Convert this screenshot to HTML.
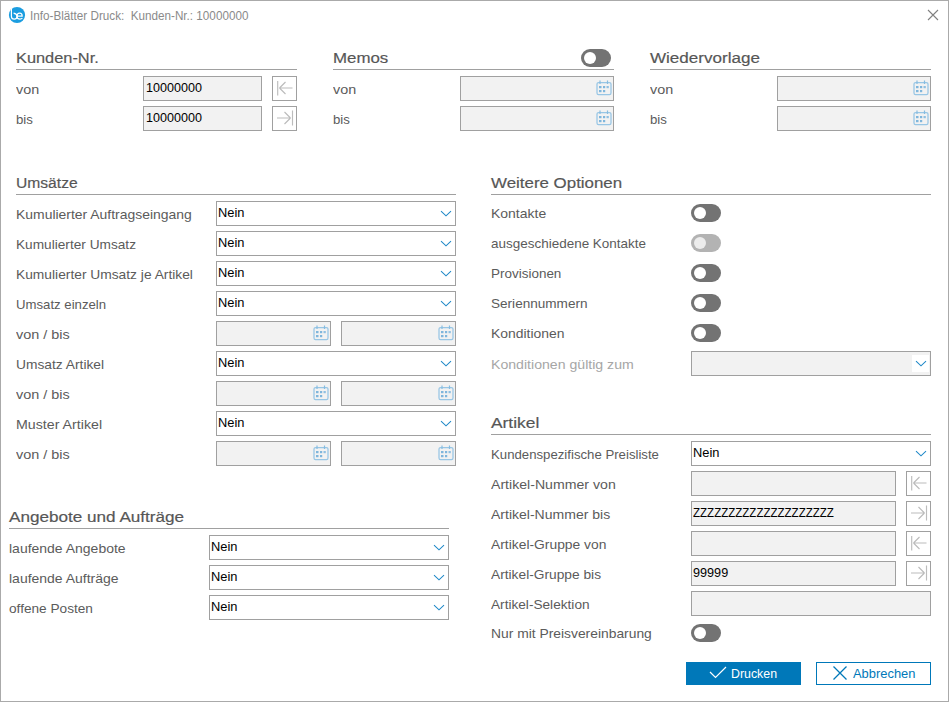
<!DOCTYPE html>
<html><head><meta charset="utf-8"><title>Info-Blätter Druck</title>
<style>
html,body{margin:0;padding:0;}
body{width:949px;height:702px;position:relative;overflow:hidden;background:#fff;font-family:"Liberation Sans", sans-serif;}
.frame{position:absolute;left:0;top:0;width:949px;height:702px;box-sizing:border-box;border:1px solid #aaaaaa;}
.t{position:absolute;white-space:nowrap;}
.ln{position:absolute;height:1px;background:#a0a0a0;}
.box{position:absolute;height:25px;box-sizing:border-box;border:1px solid #a0a0a0;}
.val{position:absolute;left:2px;top:4px;font-size:12.4px;line-height:14px;color:#000;white-space:nowrap;}
.tg{position:absolute;width:30px;height:18px;border-radius:9px;}
.kn{position:absolute;left:3px;top:3px;width:12px;height:12px;border-radius:6px;}
.chev{display:block}
svg{display:block}
</style></head><body>
<div class="frame"></div>
<svg style="position:absolute;left:0;top:0" width="30" height="30" viewBox="0 0 30 30"><circle cx="17" cy="15" r="8.1" fill="#1b9de0"/><path d="M11.4 9 V16.2 Q11.4 19.1 14.2 19.1 Q17 19.1 17 16.2 Q17 13.9 13.6 13.2" fill="none" stroke="#fff" stroke-width="1.2"/><path d="M17.2 16.2 H22.2 Q22.2 13.2 19.7 13.2 Q17 13.2 17 16.2 Q17 19.1 20 19.1 Q21.5 19.1 22.4 18.2" fill="none" stroke="#fff" stroke-width="1.2"/></svg>
<div class="t" style="left:30.40px;top:9.50px;font-size:12.40px;line-height:12.40px;color:#8a8a8a;transform:scaleX(0.9437);transform-origin:0 0;">Info-Blätter Druck:&nbsp; Kunden-Nr.: 10000000</div>
<svg style="position:absolute;left:927px;top:9px" width="13" height="13" viewBox="0 0 13 13"><path d="M1 1 L11 11 M11 1 L1 11" stroke="#808080" stroke-width="1.1" fill="none"/></svg>
<div class="t" style="left:16.20px;top:49.88px;font-size:15.50px;line-height:15.50px;color:#555555;transform:scaleX(1.0557);transform-origin:0 0;-webkit-text-stroke:0.2px #606060;">Kunden-Nr.</div>
<div class="ln" style="left:16px;top:69px;width:281px"></div>
<div class="t" style="left:15.60px;top:83.04px;font-size:13.30px;line-height:13.30px;color:#5b5b5b;transform:scaleX(1.0788);transform-origin:0 0;">von</div>
<div class="t" style="left:16.30px;top:113.04px;font-size:13.30px;line-height:13.30px;color:#5b5b5b;transform:scaleX(0.9927);transform-origin:0 0;">bis</div>
<div class="box" style="left:143px;top:76px;width:119px;background:#f2f2f2"></div>
<div class="t" style="left:145.60px;top:81.50px;font-size:12.40px;line-height:12.40px;color:#000000;transform:scaleX(1.0149);transform-origin:0 0;">10000000</div>
<div class="box" style="left:143px;top:106px;width:119px;background:#f2f2f2"></div>
<div class="t" style="left:145.60px;top:111.50px;font-size:12.40px;line-height:12.40px;color:#000000;transform:scaleX(1.0149);transform-origin:0 0;">10000000</div>
<div class="box" style="left:272px;top:76px;width:25px;background:#fff;overflow:hidden"><div style="position:absolute;left:-1px;top:-1px"><svg width="25" height="25" viewBox="0 0 25 25"><path d="M5.7 5 V19.5 M7.5 12 H20.5 M7.5 12 L13.5 6 M7.5 12 L13.5 18" stroke="#bcbcbc" stroke-width="1.15" fill="none"/></svg></div></div>
<div class="box" style="left:272px;top:106px;width:25px;background:#fff;overflow:hidden"><div style="position:absolute;left:-1px;top:-1px"><svg width="25" height="25" viewBox="0 0 25 25"><path d="M20.5 4.5 V19.5 M5 12 H18.5 M18.5 12 L12.5 6 M18.5 12 L12.5 18" stroke="#bcbcbc" stroke-width="1.15" fill="none"/></svg></div></div>
<div class="t" style="left:332.70px;top:49.88px;font-size:15.50px;line-height:15.50px;color:#555555;transform:scaleX(1.0877);transform-origin:0 0;-webkit-text-stroke:0.2px #606060;">Memos</div>
<div class="ln" style="left:333px;top:69px;width:281px"></div>
<div class="t" style="left:332.60px;top:83.04px;font-size:13.30px;line-height:13.30px;color:#5b5b5b;transform:scaleX(1.0788);transform-origin:0 0;">von</div>
<div class="t" style="left:333.30px;top:113.04px;font-size:13.30px;line-height:13.30px;color:#5b5b5b;transform:scaleX(0.9927);transform-origin:0 0;">bis</div>
<div class="box" style="left:460px;top:76px;width:154px;background:#f2f2f2">
<div style="position:absolute;left:135px;top:3px;width:17px;height:17px"><svg width="17" height="17" viewBox="0 0 17 17"><rect x="1" y="2.5" width="14" height="12" rx="1.6" fill="none" stroke="#98c6e5" stroke-width="1.25"/><path d="M4 0.4 V4 M11.5 0.4 V4" stroke="#86bce0" stroke-width="1.2" fill="none"/><rect x="3" y="6" width="2.5" height="2.2" fill="#7fb6dc"/><rect x="7" y="6" width="2.2" height="2.2" fill="#7fb6dc"/><rect x="10.5" y="6" width="2.3" height="2.2" fill="#8fc0e2"/><rect x="3" y="10" width="2.5" height="2.2" fill="#7fb6dc"/><rect x="7" y="10" width="2.2" height="2.2" fill="#7fb6dc"/></svg></div>
</div>
<div class="box" style="left:460px;top:106px;width:154px;background:#f2f2f2">
<div style="position:absolute;left:135px;top:3px;width:17px;height:17px"><svg width="17" height="17" viewBox="0 0 17 17"><rect x="1" y="2.5" width="14" height="12" rx="1.6" fill="none" stroke="#98c6e5" stroke-width="1.25"/><path d="M4 0.4 V4 M11.5 0.4 V4" stroke="#86bce0" stroke-width="1.2" fill="none"/><rect x="3" y="6" width="2.5" height="2.2" fill="#7fb6dc"/><rect x="7" y="6" width="2.2" height="2.2" fill="#7fb6dc"/><rect x="10.5" y="6" width="2.3" height="2.2" fill="#8fc0e2"/><rect x="3" y="10" width="2.5" height="2.2" fill="#7fb6dc"/><rect x="7" y="10" width="2.2" height="2.2" fill="#7fb6dc"/></svg></div>
</div>
<div class="t" style="left:649.60px;top:49.88px;font-size:15.50px;line-height:15.50px;color:#555555;transform:scaleX(1.0993);transform-origin:0 0;-webkit-text-stroke:0.2px #606060;">Wiedervorlage</div>
<div class="ln" style="left:650px;top:69px;width:281px"></div>
<div class="t" style="left:649.60px;top:83.04px;font-size:13.30px;line-height:13.30px;color:#5b5b5b;transform:scaleX(1.0788);transform-origin:0 0;">von</div>
<div class="t" style="left:650.30px;top:113.04px;font-size:13.30px;line-height:13.30px;color:#5b5b5b;transform:scaleX(0.9927);transform-origin:0 0;">bis</div>
<div class="box" style="left:777px;top:76px;width:154px;background:#f2f2f2">
<div style="position:absolute;left:135px;top:3px;width:17px;height:17px"><svg width="17" height="17" viewBox="0 0 17 17"><rect x="1" y="2.5" width="14" height="12" rx="1.6" fill="none" stroke="#98c6e5" stroke-width="1.25"/><path d="M4 0.4 V4 M11.5 0.4 V4" stroke="#86bce0" stroke-width="1.2" fill="none"/><rect x="3" y="6" width="2.5" height="2.2" fill="#7fb6dc"/><rect x="7" y="6" width="2.2" height="2.2" fill="#7fb6dc"/><rect x="10.5" y="6" width="2.3" height="2.2" fill="#8fc0e2"/><rect x="3" y="10" width="2.5" height="2.2" fill="#7fb6dc"/><rect x="7" y="10" width="2.2" height="2.2" fill="#7fb6dc"/></svg></div>
</div>
<div class="box" style="left:777px;top:106px;width:154px;background:#f2f2f2">
<div style="position:absolute;left:135px;top:3px;width:17px;height:17px"><svg width="17" height="17" viewBox="0 0 17 17"><rect x="1" y="2.5" width="14" height="12" rx="1.6" fill="none" stroke="#98c6e5" stroke-width="1.25"/><path d="M4 0.4 V4 M11.5 0.4 V4" stroke="#86bce0" stroke-width="1.2" fill="none"/><rect x="3" y="6" width="2.5" height="2.2" fill="#7fb6dc"/><rect x="7" y="6" width="2.2" height="2.2" fill="#7fb6dc"/><rect x="10.5" y="6" width="2.3" height="2.2" fill="#8fc0e2"/><rect x="3" y="10" width="2.5" height="2.2" fill="#7fb6dc"/><rect x="7" y="10" width="2.2" height="2.2" fill="#7fb6dc"/></svg></div>
</div>
<div class="tg" style="left:581px;top:49px;background:#737373"><div class="kn" style="background:#ffffff"></div></div>
<div class="t" style="left:16.20px;top:174.88px;font-size:15.50px;line-height:15.50px;color:#555555;transform:scaleX(1.0078);transform-origin:0 0;-webkit-text-stroke:0.2px #606060;">Umsätze</div>
<div class="ln" style="left:16px;top:194px;width:440px"></div>
<div class="t" style="left:16.30px;top:208.04px;font-size:13.30px;line-height:13.30px;color:#5b5b5b;transform:scaleX(1.0474);transform-origin:0 0;">Kumulierter Auftragseingang</div>
<div class="box" style="left:216px;top:201px;width:240px;background:#fff">
<div style="position:absolute;right:3px;top:9px;width:12px;height:7px"><svg class="chev" width="12" height="7" viewBox="0 0 12 7" style="overflow:visible"><path d="M1 0.2 L6 4.8 L11 0.2" fill="none" stroke="#1e88c8" stroke-width="1.05"/></svg></div>
</div>
<div class="t" style="left:218.30px;top:206.50px;font-size:12.40px;line-height:12.40px;color:#000000;transform:scaleX(1.0374);transform-origin:0 0;">Nein</div>
<div class="t" style="left:16.30px;top:238.04px;font-size:13.30px;line-height:13.30px;color:#5b5b5b;transform:scaleX(1.0276);transform-origin:0 0;">Kumulierter Umsatz</div>
<div class="box" style="left:216px;top:231px;width:240px;background:#fff">
<div style="position:absolute;right:3px;top:9px;width:12px;height:7px"><svg class="chev" width="12" height="7" viewBox="0 0 12 7" style="overflow:visible"><path d="M1 0.2 L6 4.8 L11 0.2" fill="none" stroke="#1e88c8" stroke-width="1.05"/></svg></div>
</div>
<div class="t" style="left:218.30px;top:236.50px;font-size:12.40px;line-height:12.40px;color:#000000;transform:scaleX(1.0374);transform-origin:0 0;">Nein</div>
<div class="t" style="left:16.30px;top:268.04px;font-size:13.30px;line-height:13.30px;color:#5b5b5b;transform:scaleX(1.0365);transform-origin:0 0;">Kumulierter Umsatz je Artikel</div>
<div class="box" style="left:216px;top:261px;width:240px;background:#fff">
<div style="position:absolute;right:3px;top:9px;width:12px;height:7px"><svg class="chev" width="12" height="7" viewBox="0 0 12 7" style="overflow:visible"><path d="M1 0.2 L6 4.8 L11 0.2" fill="none" stroke="#1e88c8" stroke-width="1.05"/></svg></div>
</div>
<div class="t" style="left:218.30px;top:266.50px;font-size:12.40px;line-height:12.40px;color:#000000;transform:scaleX(1.0374);transform-origin:0 0;">Nein</div>
<div class="t" style="left:16.30px;top:298.04px;font-size:13.30px;line-height:13.30px;color:#5b5b5b;transform:scaleX(0.9915);transform-origin:0 0;">Umsatz einzeln</div>
<div class="box" style="left:216px;top:291px;width:240px;background:#fff">
<div style="position:absolute;right:3px;top:9px;width:12px;height:7px"><svg class="chev" width="12" height="7" viewBox="0 0 12 7" style="overflow:visible"><path d="M1 0.2 L6 4.8 L11 0.2" fill="none" stroke="#1e88c8" stroke-width="1.05"/></svg></div>
</div>
<div class="t" style="left:218.30px;top:296.50px;font-size:12.40px;line-height:12.40px;color:#000000;transform:scaleX(1.0374);transform-origin:0 0;">Nein</div>
<div class="t" style="left:15.60px;top:328.04px;font-size:13.30px;line-height:13.30px;color:#5b5b5b;transform:scaleX(1.0854);transform-origin:0 0;">von / bis</div>
<div class="box" style="left:216px;top:321px;width:115px;background:#f2f2f2">
<div style="position:absolute;left:96px;top:3px;width:17px;height:17px"><svg width="17" height="17" viewBox="0 0 17 17"><rect x="1" y="2.5" width="14" height="12" rx="1.6" fill="none" stroke="#98c6e5" stroke-width="1.25"/><path d="M4 0.4 V4 M11.5 0.4 V4" stroke="#86bce0" stroke-width="1.2" fill="none"/><rect x="3" y="6" width="2.5" height="2.2" fill="#7fb6dc"/><rect x="7" y="6" width="2.2" height="2.2" fill="#7fb6dc"/><rect x="10.5" y="6" width="2.3" height="2.2" fill="#8fc0e2"/><rect x="3" y="10" width="2.5" height="2.2" fill="#7fb6dc"/><rect x="7" y="10" width="2.2" height="2.2" fill="#7fb6dc"/></svg></div>
</div>
<div class="box" style="left:341px;top:321px;width:115px;background:#f2f2f2">
<div style="position:absolute;left:96px;top:3px;width:17px;height:17px"><svg width="17" height="17" viewBox="0 0 17 17"><rect x="1" y="2.5" width="14" height="12" rx="1.6" fill="none" stroke="#98c6e5" stroke-width="1.25"/><path d="M4 0.4 V4 M11.5 0.4 V4" stroke="#86bce0" stroke-width="1.2" fill="none"/><rect x="3" y="6" width="2.5" height="2.2" fill="#7fb6dc"/><rect x="7" y="6" width="2.2" height="2.2" fill="#7fb6dc"/><rect x="10.5" y="6" width="2.3" height="2.2" fill="#8fc0e2"/><rect x="3" y="10" width="2.5" height="2.2" fill="#7fb6dc"/><rect x="7" y="10" width="2.2" height="2.2" fill="#7fb6dc"/></svg></div>
</div>
<div class="t" style="left:16.30px;top:358.04px;font-size:13.30px;line-height:13.30px;color:#5b5b5b;transform:scaleX(1.0366);transform-origin:0 0;">Umsatz Artikel</div>
<div class="box" style="left:216px;top:351px;width:240px;background:#fff">
<div style="position:absolute;right:3px;top:9px;width:12px;height:7px"><svg class="chev" width="12" height="7" viewBox="0 0 12 7" style="overflow:visible"><path d="M1 0.2 L6 4.8 L11 0.2" fill="none" stroke="#1e88c8" stroke-width="1.05"/></svg></div>
</div>
<div class="t" style="left:218.30px;top:356.50px;font-size:12.40px;line-height:12.40px;color:#000000;transform:scaleX(1.0374);transform-origin:0 0;">Nein</div>
<div class="t" style="left:15.60px;top:388.04px;font-size:13.30px;line-height:13.30px;color:#5b5b5b;transform:scaleX(1.0854);transform-origin:0 0;">von / bis</div>
<div class="box" style="left:216px;top:381px;width:115px;background:#f2f2f2">
<div style="position:absolute;left:96px;top:3px;width:17px;height:17px"><svg width="17" height="17" viewBox="0 0 17 17"><rect x="1" y="2.5" width="14" height="12" rx="1.6" fill="none" stroke="#98c6e5" stroke-width="1.25"/><path d="M4 0.4 V4 M11.5 0.4 V4" stroke="#86bce0" stroke-width="1.2" fill="none"/><rect x="3" y="6" width="2.5" height="2.2" fill="#7fb6dc"/><rect x="7" y="6" width="2.2" height="2.2" fill="#7fb6dc"/><rect x="10.5" y="6" width="2.3" height="2.2" fill="#8fc0e2"/><rect x="3" y="10" width="2.5" height="2.2" fill="#7fb6dc"/><rect x="7" y="10" width="2.2" height="2.2" fill="#7fb6dc"/></svg></div>
</div>
<div class="box" style="left:341px;top:381px;width:115px;background:#f2f2f2">
<div style="position:absolute;left:96px;top:3px;width:17px;height:17px"><svg width="17" height="17" viewBox="0 0 17 17"><rect x="1" y="2.5" width="14" height="12" rx="1.6" fill="none" stroke="#98c6e5" stroke-width="1.25"/><path d="M4 0.4 V4 M11.5 0.4 V4" stroke="#86bce0" stroke-width="1.2" fill="none"/><rect x="3" y="6" width="2.5" height="2.2" fill="#7fb6dc"/><rect x="7" y="6" width="2.2" height="2.2" fill="#7fb6dc"/><rect x="10.5" y="6" width="2.3" height="2.2" fill="#8fc0e2"/><rect x="3" y="10" width="2.5" height="2.2" fill="#7fb6dc"/><rect x="7" y="10" width="2.2" height="2.2" fill="#7fb6dc"/></svg></div>
</div>
<div class="t" style="left:16.30px;top:418.04px;font-size:13.30px;line-height:13.30px;color:#5b5b5b;transform:scaleX(1.0683);transform-origin:0 0;">Muster Artikel</div>
<div class="box" style="left:216px;top:411px;width:240px;background:#fff">
<div style="position:absolute;right:3px;top:9px;width:12px;height:7px"><svg class="chev" width="12" height="7" viewBox="0 0 12 7" style="overflow:visible"><path d="M1 0.2 L6 4.8 L11 0.2" fill="none" stroke="#1e88c8" stroke-width="1.05"/></svg></div>
</div>
<div class="t" style="left:218.30px;top:416.50px;font-size:12.40px;line-height:12.40px;color:#000000;transform:scaleX(1.0374);transform-origin:0 0;">Nein</div>
<div class="t" style="left:15.60px;top:448.04px;font-size:13.30px;line-height:13.30px;color:#5b5b5b;transform:scaleX(1.0854);transform-origin:0 0;">von / bis</div>
<div class="box" style="left:216px;top:441px;width:115px;background:#f2f2f2">
<div style="position:absolute;left:96px;top:3px;width:17px;height:17px"><svg width="17" height="17" viewBox="0 0 17 17"><rect x="1" y="2.5" width="14" height="12" rx="1.6" fill="none" stroke="#98c6e5" stroke-width="1.25"/><path d="M4 0.4 V4 M11.5 0.4 V4" stroke="#86bce0" stroke-width="1.2" fill="none"/><rect x="3" y="6" width="2.5" height="2.2" fill="#7fb6dc"/><rect x="7" y="6" width="2.2" height="2.2" fill="#7fb6dc"/><rect x="10.5" y="6" width="2.3" height="2.2" fill="#8fc0e2"/><rect x="3" y="10" width="2.5" height="2.2" fill="#7fb6dc"/><rect x="7" y="10" width="2.2" height="2.2" fill="#7fb6dc"/></svg></div>
</div>
<div class="box" style="left:341px;top:441px;width:115px;background:#f2f2f2">
<div style="position:absolute;left:96px;top:3px;width:17px;height:17px"><svg width="17" height="17" viewBox="0 0 17 17"><rect x="1" y="2.5" width="14" height="12" rx="1.6" fill="none" stroke="#98c6e5" stroke-width="1.25"/><path d="M4 0.4 V4 M11.5 0.4 V4" stroke="#86bce0" stroke-width="1.2" fill="none"/><rect x="3" y="6" width="2.5" height="2.2" fill="#7fb6dc"/><rect x="7" y="6" width="2.2" height="2.2" fill="#7fb6dc"/><rect x="10.5" y="6" width="2.3" height="2.2" fill="#8fc0e2"/><rect x="3" y="10" width="2.5" height="2.2" fill="#7fb6dc"/><rect x="7" y="10" width="2.2" height="2.2" fill="#7fb6dc"/></svg></div>
</div>
<div class="t" style="left:8.60px;top:508.88px;font-size:15.50px;line-height:15.50px;color:#555555;transform:scaleX(1.1043);transform-origin:0 0;-webkit-text-stroke:0.2px #606060;">Angebote und Aufträge</div>
<div class="ln" style="left:9px;top:528px;width:440px"></div>
<div class="t" style="left:8.70px;top:542.04px;font-size:13.30px;line-height:13.30px;color:#5b5b5b;transform:scaleX(1.0512);transform-origin:0 0;">laufende Angebote</div>
<div class="box" style="left:209px;top:535px;width:240px;background:#fff">
<div style="position:absolute;right:3px;top:9px;width:12px;height:7px"><svg class="chev" width="12" height="7" viewBox="0 0 12 7" style="overflow:visible"><path d="M1 0.2 L6 4.8 L11 0.2" fill="none" stroke="#1e88c8" stroke-width="1.05"/></svg></div>
</div>
<div class="t" style="left:211.30px;top:540.50px;font-size:12.40px;line-height:12.40px;color:#000000;transform:scaleX(1.0374);transform-origin:0 0;">Nein</div>
<div class="t" style="left:8.70px;top:572.04px;font-size:13.30px;line-height:13.30px;color:#5b5b5b;transform:scaleX(1.0511);transform-origin:0 0;">laufende Aufträge</div>
<div class="box" style="left:209px;top:565px;width:240px;background:#fff">
<div style="position:absolute;right:3px;top:9px;width:12px;height:7px"><svg class="chev" width="12" height="7" viewBox="0 0 12 7" style="overflow:visible"><path d="M1 0.2 L6 4.8 L11 0.2" fill="none" stroke="#1e88c8" stroke-width="1.05"/></svg></div>
</div>
<div class="t" style="left:211.30px;top:570.50px;font-size:12.40px;line-height:12.40px;color:#000000;transform:scaleX(1.0374);transform-origin:0 0;">Nein</div>
<div class="t" style="left:8.70px;top:602.04px;font-size:13.30px;line-height:13.30px;color:#5b5b5b;transform:scaleX(1.0257);transform-origin:0 0;">offene Posten</div>
<div class="box" style="left:209px;top:595px;width:240px;background:#fff">
<div style="position:absolute;right:3px;top:9px;width:12px;height:7px"><svg class="chev" width="12" height="7" viewBox="0 0 12 7" style="overflow:visible"><path d="M1 0.2 L6 4.8 L11 0.2" fill="none" stroke="#1e88c8" stroke-width="1.05"/></svg></div>
</div>
<div class="t" style="left:211.30px;top:600.50px;font-size:12.40px;line-height:12.40px;color:#000000;transform:scaleX(1.0374);transform-origin:0 0;">Nein</div>
<div class="t" style="left:490.60px;top:174.88px;font-size:15.50px;line-height:15.50px;color:#555555;transform:scaleX(1.0900);transform-origin:0 0;-webkit-text-stroke:0.2px #606060;">Weitere Optionen</div>
<div class="ln" style="left:491px;top:194px;width:440px"></div>
<div class="t" style="left:491.10px;top:207.04px;font-size:13.30px;line-height:13.30px;color:#5b5b5b;transform:scaleX(1.0507);transform-origin:0 0;">Kontakte</div>
<div class="tg" style="left:691px;top:204px;background:#737373"><div class="kn" style="background:#ffffff"></div></div>
<div class="t" style="left:491.30px;top:237.04px;font-size:13.30px;line-height:13.30px;color:#5b5b5b;transform:scaleX(1.0132);transform-origin:0 0;">ausgeschiedene Kontakte</div>
<div class="tg" style="left:691px;top:234px;background:#b3b3b3"><div class="kn" style="background:#ececec"></div></div>
<div class="t" style="left:491.30px;top:267.04px;font-size:13.30px;line-height:13.30px;color:#5b5b5b;transform:scaleX(1.0126);transform-origin:0 0;">Provisionen</div>
<div class="tg" style="left:691px;top:264px;background:#737373"><div class="kn" style="background:#ffffff"></div></div>
<div class="t" style="left:491.30px;top:297.04px;font-size:13.30px;line-height:13.30px;color:#5b5b5b;transform:scaleX(1.0205);transform-origin:0 0;">Seriennummern</div>
<div class="tg" style="left:691px;top:294px;background:#737373"><div class="kn" style="background:#ffffff"></div></div>
<div class="t" style="left:491.30px;top:327.04px;font-size:13.30px;line-height:13.30px;color:#5b5b5b;transform:scaleX(1.0467);transform-origin:0 0;">Konditionen</div>
<div class="tg" style="left:691px;top:324px;background:#737373"><div class="kn" style="background:#ffffff"></div></div>
<div class="t" style="left:491.30px;top:358.04px;font-size:13.30px;line-height:13.30px;color:#a6a6a6;transform:scaleX(1.0610);transform-origin:0 0;">Konditionen gültig zum</div>
<div class="box" style="left:691px;top:351px;width:240px;background:#f2f2f2">
<div style="position:absolute;right:1px;top:3px;width:17px;height:17px;background:#fff"></div>
<div style="position:absolute;right:3px;top:9px;width:12px;height:7px"><svg class="chev" width="12" height="7" viewBox="0 0 12 7" style="overflow:visible"><path d="M1 0.2 L6 4.8 L11 0.2" fill="none" stroke="#1e88c8" stroke-width="1.05"/></svg></div>
</div>
<div class="t" style="left:490.50px;top:414.88px;font-size:15.50px;line-height:15.50px;color:#555555;transform:scaleX(1.1209);transform-origin:0 0;-webkit-text-stroke:0.2px #606060;">Artikel</div>
<div class="ln" style="left:491px;top:434px;width:440px"></div>
<div class="t" style="left:491.30px;top:448.04px;font-size:13.30px;line-height:13.30px;color:#5b5b5b;transform:scaleX(0.9923);transform-origin:0 0;">Kundenspezifische Preisliste</div>
<div class="box" style="left:691px;top:441px;width:240px;background:#fff">
<div style="position:absolute;right:3px;top:9px;width:12px;height:7px"><svg class="chev" width="12" height="7" viewBox="0 0 12 7" style="overflow:visible"><path d="M1 0.2 L6 4.8 L11 0.2" fill="none" stroke="#1e88c8" stroke-width="1.05"/></svg></div>
</div>
<div class="t" style="left:693.30px;top:446.50px;font-size:12.40px;line-height:12.40px;color:#000000;transform:scaleX(1.0374);transform-origin:0 0;">Nein</div>
<div class="t" style="left:491.30px;top:478.04px;font-size:13.30px;line-height:13.30px;color:#5b5b5b;transform:scaleX(1.0618);transform-origin:0 0;">Artikel-Nummer von</div>
<div class="box" style="left:691px;top:471px;width:205px;background:#f2f2f2"></div>
<div class="box" style="left:906px;top:471px;width:25px;background:#fff;overflow:hidden"><div style="position:absolute;left:-1px;top:-1px"><svg width="25" height="25" viewBox="0 0 25 25"><path d="M5.7 5 V19.5 M7.5 12 H20.5 M7.5 12 L13.5 6 M7.5 12 L13.5 18" stroke="#bcbcbc" stroke-width="1.15" fill="none"/></svg></div></div>
<div class="t" style="left:491.30px;top:508.04px;font-size:13.30px;line-height:13.30px;color:#5b5b5b;transform:scaleX(1.0544);transform-origin:0 0;">Artikel-Nummer bis</div>
<div class="box" style="left:691px;top:501px;width:205px;background:#f2f2f2"></div>
<div class="t" style="left:692.50px;top:506.50px;font-size:12.40px;line-height:12.40px;color:#000000;transform:scaleX(0.9305);transform-origin:0 0;">ZZZZZZZZZZZZZZZZZZZZ</div>
<div class="box" style="left:906px;top:501px;width:25px;background:#fff;overflow:hidden"><div style="position:absolute;left:-1px;top:-1px"><svg width="25" height="25" viewBox="0 0 25 25"><path d="M20.5 4.5 V19.5 M5 12 H18.5 M18.5 12 L12.5 6 M18.5 12 L12.5 18" stroke="#bcbcbc" stroke-width="1.15" fill="none"/></svg></div></div>
<div class="t" style="left:491.30px;top:538.04px;font-size:13.30px;line-height:13.30px;color:#5b5b5b;transform:scaleX(1.0413);transform-origin:0 0;">Artikel-Gruppe von</div>
<div class="box" style="left:691px;top:531px;width:205px;background:#f2f2f2"></div>
<div class="box" style="left:906px;top:531px;width:25px;background:#fff;overflow:hidden"><div style="position:absolute;left:-1px;top:-1px"><svg width="25" height="25" viewBox="0 0 25 25"><path d="M5.7 5 V19.5 M7.5 12 H20.5 M7.5 12 L13.5 6 M7.5 12 L13.5 18" stroke="#bcbcbc" stroke-width="1.15" fill="none"/></svg></div></div>
<div class="t" style="left:491.30px;top:568.04px;font-size:13.30px;line-height:13.30px;color:#5b5b5b;transform:scaleX(1.0338);transform-origin:0 0;">Artikel-Gruppe bis</div>
<div class="box" style="left:691px;top:561px;width:205px;background:#f2f2f2"></div>
<div class="t" style="left:692.80px;top:566.50px;font-size:12.40px;line-height:12.40px;color:#000000;transform:scaleX(1.0211);transform-origin:0 0;">99999</div>
<div class="box" style="left:906px;top:561px;width:25px;background:#fff;overflow:hidden"><div style="position:absolute;left:-1px;top:-1px"><svg width="25" height="25" viewBox="0 0 25 25"><path d="M20.5 4.5 V19.5 M5 12 H18.5 M18.5 12 L12.5 6 M18.5 12 L12.5 18" stroke="#bcbcbc" stroke-width="1.15" fill="none"/></svg></div></div>
<div class="t" style="left:491.30px;top:598.04px;font-size:13.30px;line-height:13.30px;color:#5b5b5b;transform:scaleX(1.0258);transform-origin:0 0;">Artikel-Selektion</div>
<div class="box" style="left:691px;top:591px;width:240px;background:#f2f2f2"></div>
<div class="t" style="left:491.30px;top:627.04px;font-size:13.30px;line-height:13.30px;color:#5b5b5b;transform:scaleX(1.0411);transform-origin:0 0;">Nur mit Preisvereinbarung</div>
<div class="tg" style="left:691px;top:624px;background:#737373"><div class="kn" style="background:#ffffff"></div></div>
<div style="position:absolute;left:686px;top:662px;width:115px;height:23px;background:#0078b9"></div>
<svg style="position:absolute;left:708px;top:665px" width="20" height="15" viewBox="0 0 20 15"><path d="M2 7 L7.5 12.5 L18 2" stroke="#fff" stroke-width="1.2" fill="none"/></svg>
<div class="t" style="left:731.00px;top:667.00px;font-size:13.00px;line-height:13.00px;color:#ffffff;transform:scaleX(0.9512);transform-origin:0 0;">Drucken</div>
<div style="position:absolute;left:816px;top:662px;width:115px;height:23px;box-sizing:border-box;border:1px solid #0078b9;background:#fff"></div>
<svg style="position:absolute;left:832px;top:665px" width="16" height="16" viewBox="0 0 16 16"><path d="M1.5 1.5 L14.5 14.5 M14.5 1.5 L1.5 14.5" stroke="#0078b9" stroke-width="1.3" fill="none"/></svg>
<div class="t" style="left:852.50px;top:667.00px;font-size:13.00px;line-height:13.00px;color:#0078b9;transform:scaleX(0.9933);transform-origin:0 0;">Abbrechen</div>
</body></html>
